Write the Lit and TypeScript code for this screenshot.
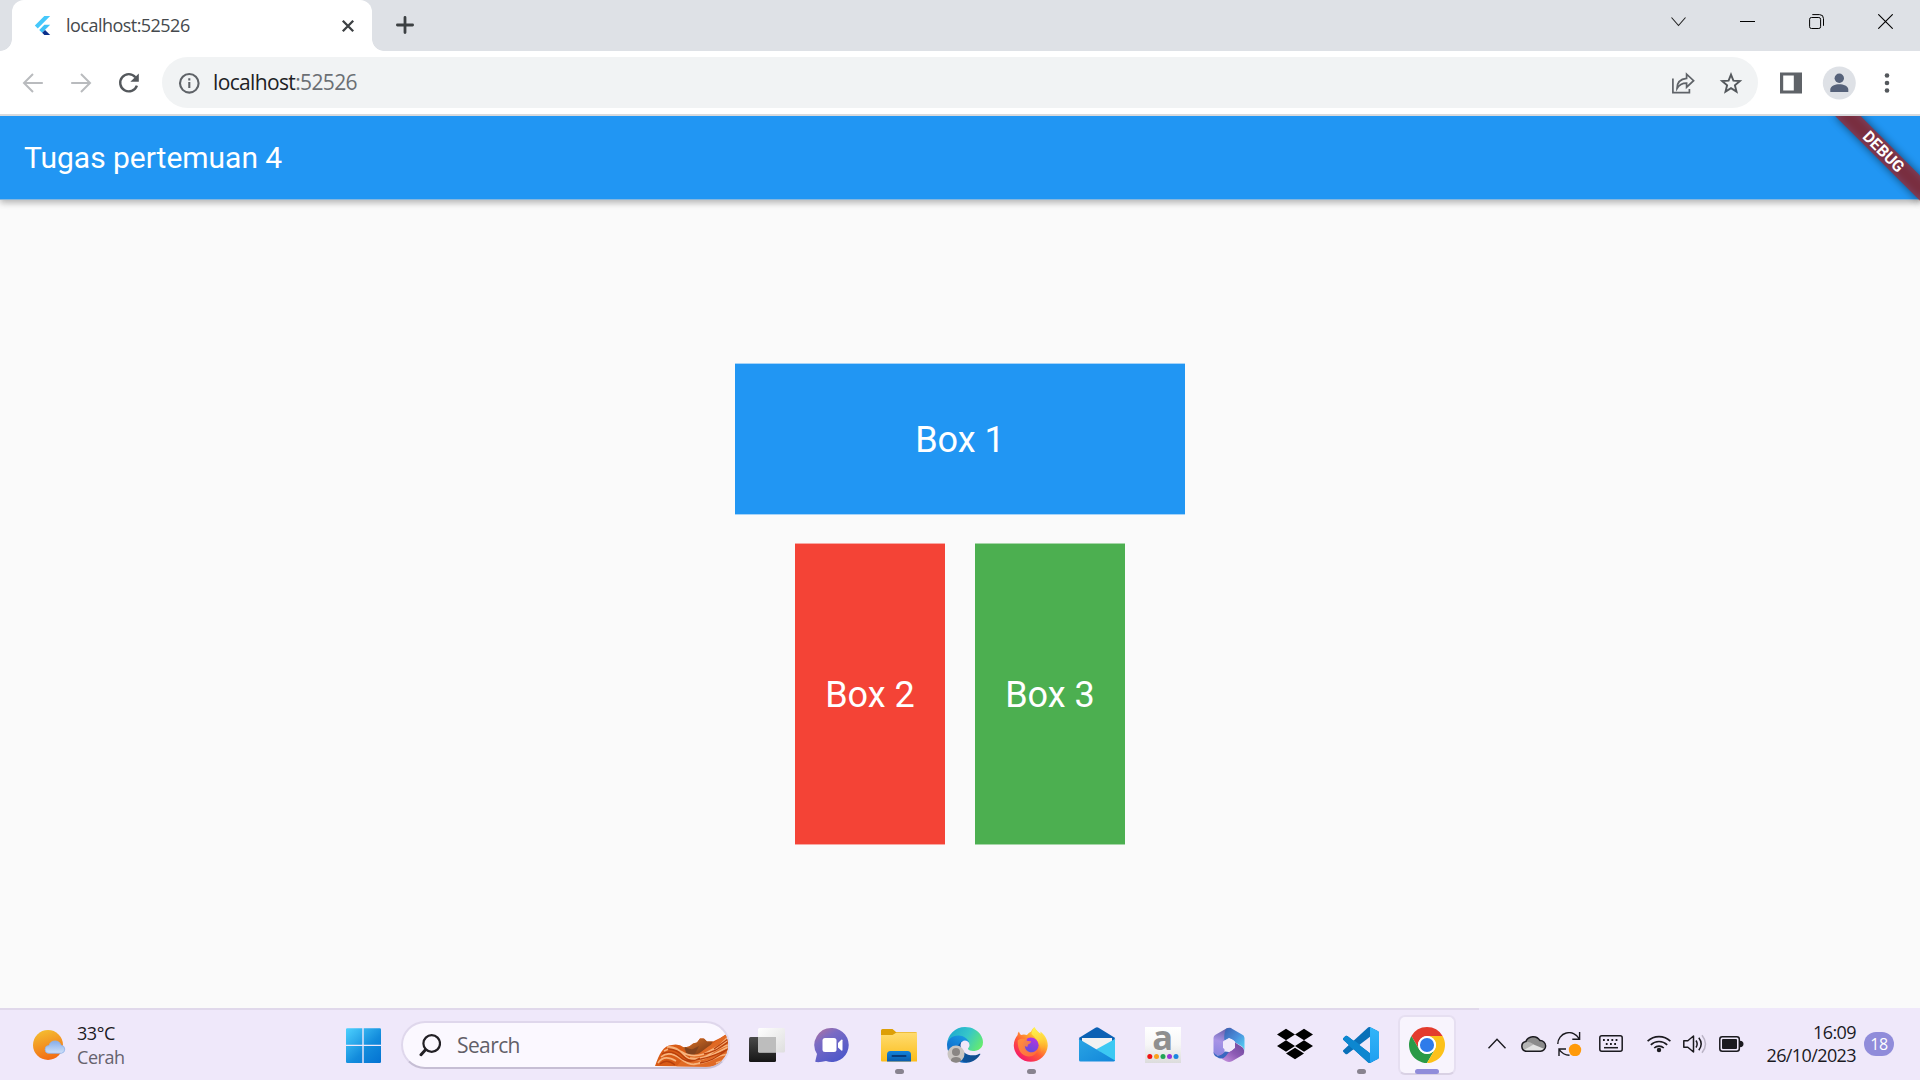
import { LitElement, html, svg, css, nothing } from "lit";
import { customElement } from "lit/decorators.js";
import { classMap } from "lit/directives/class-map.js";

const uiFont = css`"Open Sans", "Noto Sans", sans-serif`;

/* ---------- Browser window: tab strip and toolbar ---------- */

@customElement("browser-bar")
class BrowserBar extends LitElement {
  static styles = css`
    :host { display: block; font-family: ${uiFont}; }
    svg { display: block; flex: none; }
    .strip { display: flex; height: 51px; background: #dee1e6; padding-left: 12px; }
    .tab {
      position: relative; display: flex; align-items: center; box-sizing: border-box;
      width: 360px; height: 51px; padding: 0 17px 0 21px; background: #fff;
      border-radius: 12px 12px 0 0;
    }
    .tab::before, .tab::after {
      content: ""; position: absolute; bottom: 0; width: 12px; height: 12px;
    }
    .tab::before { left: -12px; background: radial-gradient(circle at 0 0, transparent 11.5px, #fff 12.2px); }
    .tab::after { right: -12px; background: radial-gradient(circle at 100% 0, transparent 11.5px, #fff 12.2px); }
    .tab-title {
      flex: 1; margin-left: 14px; padding-bottom: 2px; font-size: 18px; line-height: 24px; color: #45494d;
      letter-spacing: -0.53px; white-space: nowrap;
    }
    .plus { margin: 16px 0 0 24px; }
    .controls { display: flex; margin-left: auto; padding-top: 14px; gap: 54px; padding-right: 27px; }
    .bar { display: flex; align-items: center; height: 63px; background: #fff; border-bottom: 2px solid #d8dadd; }
    .nav { display: flex; align-items: center; gap: 26px; padding-left: 22px; width: 140px; }
    .omnibox {
      display: flex; align-items: center; flex: none; box-sizing: border-box; width: 1596px; height: 51px;
      border-radius: 26px; background: #f1f3f4; padding: 0 15px 0 16px;
    }
    .url {
      flex: 1; margin-left: 13px; padding-bottom: 2px; font-size: 21px; line-height: 28px; letter-spacing: -0.64px;
      color: #202124; white-space: nowrap;
    }
    .port { color: #6b6f74; }
    .share { margin-right: 1px; }
    .star { margin-left: 23px; }
    .panel { margin-left: 22px; }
    .avatar { margin-left: 20px; }
    .dots { margin-left: 27px; }
  `;

  render() {
    return html`
      <div class="strip">
        <div class="tab">
          <svg width="19" height="19" viewBox="0 0 24 24">
            <path fill="#45c8fb" d="M14.314 0L2.3 12 6 15.7 21.684.013h-7.357z" />
            <path fill="#3fc2f7" d="M14.328 11.072L7.857 17.53l3.69 3.69 10.14-10.14z" />
            <path fill="#0b2f8a" d="M11.547 21.22L14.327 24H21.7l-6.46-6.468z" />
          </svg>
          <span class="tab-title">localhost:52526</span>
          <svg width="14" height="14" viewBox="0 0 14 14" stroke="#3c4043" stroke-width="2.3">
            <path d="M1.8 1.8l10.4 10.4M12.2 1.8L1.8 12.2" />
          </svg>
        </div>
        <svg class="plus" width="18" height="18" viewBox="0 0 18 18" stroke="#3c4043" stroke-width="2.8" stroke-linecap="round">
          <path d="M9 1.4v15.2M1.4 9h15.2" />
        </svg>
        <div class="controls">
          <svg width="15" height="15" viewBox="0 0 15 15" fill="none" stroke="#222" stroke-width="1.1"><path d="M.5 3.5L7.5 11.5 14.5 3.5" /></svg>
          <svg width="15" height="15" viewBox="0 0 15 15"><rect y="7" width="15" height="1" fill="#000" /></svg>
          <svg width="15" height="15" viewBox="0 0 15 15" fill="none" stroke="#000">
            <rect x=".6" y="3.5" width="11" height="11" rx="1.8" />
            <path d="M3.3 .6h7.2a4 4 0 0 1 4 4v7.2" />
          </svg>
          <svg width="15" height="15" viewBox="0 0 15 15" stroke="#000" stroke-width="1.1"><path d="M.3 .3l14.4 14.4M14.7 .3L.3 14.7" /></svg>
        </div>
      </div>
      <div class="bar">
        <div class="nav">
          <svg width="22" height="22" viewBox="0 0 22 22" fill="none" stroke="#b9bbbe" stroke-width="2"><path d="M20.8 11H2.5M11 2L2 11l9 9" /></svg>
          <svg width="22" height="22" viewBox="0 0 22 22" fill="none" stroke="#b9bbbe" stroke-width="2"><path d="M1.2 11h18.3M11 2l9 9-9 9" /></svg>
          <svg width="22" height="22" viewBox="0 0 22 22" fill="none">
            <path d="M17.4 5.2A8.6 8.6 0 1 0 18.9 13.6" stroke="#54585c" stroke-width="2.4" />
            <path d="M20.8 1.4v8.4h-8.4z" fill="#54585c" />
          </svg>
        </div>
        <div class="omnibox">
          <svg width="22" height="22" viewBox="0 0 22 22" fill="none" stroke="#5f6368" stroke-width="2.1">
            <circle cx="11.3" cy="11.3" r="9.3" /><path d="M11.3 10v6M11.3 6.200v2.300" />
          </svg>
          <span class="url">localhost<span class="port">:52526</span></span>
          <svg class="share" width="24" height="22" viewBox="0 0 24 22" fill="none" stroke="#5f6368" stroke-width="1.7">
            <path d="M1.9 6.5V20.6H18.4V17" />
            <path stroke-linejoin="miter" d="M6 16.5C6 10.5 9.5 7 15.6 6.4V2.2L22.6 8.7 15.6 15.2V11.2C11 11.2 8.2 12.6 6 16.5z" />
          </svg>
          <svg class="star" width="24" height="24" viewBox="0 0 24 24" fill="none" stroke="#54585c" stroke-width="1.9">
            <path d="M12 3.6l2.4 6 6.5.5-5 4.2 1.6 6.3L12 17.1l-5.500 3.500 1.600-6.300-5-4.200 6.500-.5z" />
          </svg>
        </div>
        <svg class="panel" width="22" height="22" viewBox="0 0 22 22"><path fill="#5f6368" fill-rule="evenodd" d="M0 .5h22v21H0zM3.2 3.5v15h10.6v-15z" /></svg>
        <svg class="avatar" width="34" height="34" viewBox="0 0 34 34">
          <circle cx="17.300" cy="17" r="16.500" fill="#dee1e6" />
          <circle cx="17.300" cy="12.200" r="4.700" fill="#56627a" />
          <path fill="#56627a" d="M8.300 26v-2.400c0-3.800 5-5.400 9-5.400s9 1.600 9 5.400V26z" />
        </svg>
        <svg class="dots" width="8" height="22" viewBox="0 0 8 22" fill="#54585c">
          <circle cx="4" cy="3.5" r="2.3" /><circle cx="4" cy="11" r="2.3" /><circle cx="4" cy="18.5" r="2.3" />
        </svg>
      </div>
    `;
  }
}

/* ---------- Page content ---------- */

@customElement("demo-page")
class DemoPage extends LitElement {
  static styles = css`
    :host {
      display: flex; flex-direction: column; position: relative; overflow: hidden;
      background: #fafafa; font-family: Roboto, sans-serif; color: #fff;
    }
    .appbar {
      display: flex; align-items: center; box-sizing: border-box; height: 84px; flex: none; padding-left: 24px;
      background: #2196f3; border-bottom: 1px solid #86b7de; font-size: 30px; font-weight: 450;
      letter-spacing: -0.02px; white-space: nowrap;
      box-shadow: 0 3px 6px rgba(0, 0, 0, 0.2), 0 1px 9px rgba(0, 0, 0, 0.12);
    }
    .banner { position: absolute; top: 0; right: 0; display: block; }
    .body { flex: 1; display: flex; flex-direction: column; align-items: center; justify-content: center; gap: 30px; }
    .row { display: flex; gap: 30px; }
    .box {
      display: flex; align-items: center; justify-content: center; box-sizing: border-box; width: 150px; height: 300px;
      padding-top: 2px; font-size: 36px; line-height: 42px;
    }
    .blue { width: 450px; height: 150px; background: #2196f3; box-shadow: 0 -1px #a6d3f8, 0 1px #a6d3f8; }
    .red { background: #f44336; box-shadow: 0 -1px #f8a8a3, 0 1px #f8a8a3; }
    .green { background: #4caf50; box-shadow: 0 -1px #a6d6a8, 0 1px #a6d6a8; }
  `;

  render() {
    return html`
      <div class="appbar">Tugas pertemuan 4</div>
      <div class="body">
        <div class="box blue">Box 1</div>
        <div class="row">
          <div class="box red">Box 2</div>
          <div class="box green">Box 3</div>
        </div>
      </div>
      <svg class="banner" width="110" height="110" viewBox="-110 0 110 110">
        <defs><filter id="soft" x="-20%" y="-80%" width="140%" height="260%"><feGaussianBlur stdDeviation="4.5" /></filter></defs>
        <g transform="rotate(45)">
          <rect x="-60" y="42" width="120" height="18" fill="#000" opacity=".5" filter="url(#soft)" />
          <rect x="-60" y="42" width="120" height="18" fill="#b71c1c" fill-opacity=".627" />
          <text x="-.5" y="56.4" text-anchor="middle" textLength="51" lengthAdjust="spacingAndGlyphs" font-family="Roboto, sans-serif" font-size="16" font-weight="700" fill="#fff">DEBUG</text>
        </g>
      </svg>
    `;
  }
}

/* ---------- Taskbar ---------- */

const appIcons = {
  taskView: svg`
    <defs>
      <linearGradient id="tv1" x2="0" y2="1"><stop stop-color="#4a4a4a" /><stop offset="1" stop-color="#161616" /></linearGradient>
      <linearGradient id="tv2" x2="1" y2="1"><stop stop-color="#fff" /><stop offset="1" stop-color="#dedede" /></linearGradient>
    </defs>
    <rect x="0" y="10" width="27" height="25" rx="1.5" fill="url(#tv1)" />
    <rect x="9" y="1" width="27" height="24.5" rx="1.5" fill="url(#tv2)" />
    <path d="M9 10h18v15.500h-16.500a1.500 1.500 0 0 1-1.500-1.500z" fill="#bdbdbd" />`,
  chat: svg`
    <defs><linearGradient id="ch" x1=".1" y1="0" x2=".7" y2=".9"><stop stop-color="#b0729f" /><stop offset=".35" stop-color="#7a6bc4" /><stop offset="1" stop-color="#5059c9" /></linearGradient></defs>
    <path fill="url(#ch)" d="M17.500 1A17 17 0 1 1 11 34c-3 .9-6.500 1.300-9.700 1.100C.4 35 .2 34.500.4 33.800L2 27A17 17 0 0 1 17.500 1z" />
    <rect x="7.500" y="11" width="14" height="14" rx="2.500" fill="#fff" />
    <path fill="#fff" d="M23 16l3.300-3.200c.6-.5 1.200-.2 1.200.5v9.600c0 .8-.6 1-1.200.5L23 20.500z" />`,
  folder: svg`
    <defs>
      <linearGradient id="fo" x2="0" y2="1"><stop stop-color="#ffdc70" /><stop offset="1" stop-color="#fbbd1b" /></linearGradient>
      <linearGradient id="fb" x2="0" y2="1"><stop stop-color="#1183dc" /><stop offset="1" stop-color="#0a5cab" /></linearGradient>
    </defs>
    <path fill="#dd9f07" d="M0 3.500A1.500 1.500 0 0 1 1.500 2h10l3.500 3h19.500A1.500 1.500 0 0 1 36 6.500V14H0z" />
    <path fill="url(#fo)" d="M0 8h11.500l4-2.500h20.500v29H1a1 1 0 0 1-1-1z" />
    <path fill="url(#fb)" d="M6 34.500V27.500a3.500 3.500 0 0 1 3.500-3.500h17a3.500 3.500 0 0 1 3.500 3.500v7z" />
    <rect x="10.500" y="28" width="15" height="2" rx="1" fill="#063b7b" />`,
  edge: svg`
    <defs>
      <linearGradient id="ed1" x1="0" y1=".5" x2="1" y2=".5"><stop stop-color="#0c59a4" /><stop offset="1" stop-color="#114a8b" /></linearGradient>
      <linearGradient id="ed2" x1=".7" y1="0" x2=".2" y2="1"><stop stop-color="#1b9de2" /><stop offset=".4" stop-color="#1380d8" /><stop offset="1" stop-color="#0f5fb8" /></linearGradient>
      <linearGradient id="ed3" x1="0" y1=".3" x2="1" y2=".7"><stop stop-color="#1da9cf" /><stop offset=".5" stop-color="#36c6c9" /><stop offset="1" stop-color="#66eb6e" /></linearGradient>
    </defs>
    <g transform="scale(.1406)">
      <path fill="url(#ed1)" d="M231 190.500c-3.400 1.800-6.900 3.400-10.500 4.700a101.500 101.500 0 0 1-35.900 6.500c-47.300 0-88.500-32.500-88.500-74.300a31.500 31.500 0 0 1 16.400-27.300c-42.800 1.800-53.800 46.400-53.800 72.500 0 73.900 68.100 81.400 82.800 81.400 7.900 0 19.800-2.300 27-4.600l1.300-.4a128.300 128.300 0 0 0 66.600-52.800 4 4 0 0 0-5.400-5.700z" />
      <path fill="url(#ed2)" d="M105.700 241.400a79.200 79.200 0 0 1-22.700-21.300 80.700 80.700 0 0 1 29.500-120c3.100-1.500 8.400-4.100 15.500-4a32.400 32.400 0 0 1 25.700 13 31.900 31.900 0 0 1 6.300 18.700c0-.2 24.500-79.600-80-79.600-43.900 0-80 41.700-80 78.200a130.200 130.200 0 0 0 12.100 56 128 128 0 0 0 156.400 67 75.500 75.500 0 0 1-62.800-8z" />
      <path fill="url(#ed3)" d="M152.300 148.900c-.8 1-3.300 2.500-3.300 5.700 0 2.600 1.700 5.100 4.700 7.200 14.400 10 41.500 8.700 41.600 8.700a59.600 59.600 0 0 0 30.300-8.300 61.400 61.400 0 0 0 30.400-52.900c.3-22.400-8-37.300-11.300-43.900C223.500 23.900 177.700 0 128 0A128 128 0 0 0 0 126.200c.5-36.500 36.800-66 80-66 3.500 0 23.500.3 42 10.100 16.300 8.600 24.900 18.900 30.800 29.200 6.200 10.700 7.300 24.100 7.300 29.500 0 5.300-2.700 13.300-7.800 19.900z" />
    </g>
    <circle cx="9" cy="27" r="8.500" fill="#c9c5c1" />
    <circle cx="9" cy="25" r="4" fill="#8a8683" />
    <path fill="#8a8683" d="M4 34v-1c0-2 2.500-3 5-3s5 1 5 3v1a8.500 8.500 0 0 1-10 0z" />`,
  firefox: svg`
    <defs>
      <linearGradient id="ff1" x1=".85" y1=".1" x2=".2" y2=".95"><stop stop-color="#fff44f" /><stop offset=".3" stop-color="#ffb02e" /><stop offset=".6" stop-color="#ff5a36" /><stop offset="1" stop-color="#f5156c" /></linearGradient>
      <linearGradient id="ff2" x1=".7" y1="0" x2=".3" y2="1"><stop stop-color="#b833e1" /><stop offset="1" stop-color="#5b4fdc" /></linearGradient>
      <linearGradient id="ff3" x1="0" y1="0" x2="1" y2=".6"><stop stop-color="#ff9640" /><stop offset="1" stop-color="#ff7139" /></linearGradient>
      <linearGradient id="ff4" x1=".5" y1="0" x2=".6" y2="1"><stop stop-color="#fff44f" /><stop offset=".5" stop-color="#ffd43a" /><stop offset="1" stop-color="#ff9a2b" stop-opacity=".2" /></linearGradient>
    </defs>
    <path fill="url(#ff1)" d="M6 4.500c.3 1.500 1 2.700 2 3.500 1.800-.7 4-.7 6 0C15 6.500 16.500 5.300 18 4.800 19 2.500 20 1 21.500.2 23 3 25.500 5 27.500 6.700c0-.7 0-1.500-.2-2.200C32 8 35 13 34.700 19A17 17 0 0 1 .8 19C.6 14.500 2.500 10.500 4.700 8c-.1-1.200.4-2.600 1.300-3.500z" />
    <path fill="url(#ff4)" d="M18.500 7C18.800 4 20 1.200 21.500.2 23 4.500 28 6.500 30.300 12c2 5.200.8 10.500-2.300 14 0-6-1.500-11-9.500-19z" />
    <circle cx="17.800" cy="18.200" r="7.800" fill="url(#ff2)" />
    <path fill="url(#ff3)" d="M4.700 13.500c2-1.800 4.500-2 6.500-1.200 1-.8 2.300-1.200 3.600-1.300-.8.900-1.200 1.800-1 2.700 1.200.5 3 .3 4.400.5-.1 1.600-1.700 2.500-3.200 3.200-.4 1-.4 1.600-.1 2.200-1 .3-2.200.1-3-.6 0 4.200 3.700 6.700 7.500 6.200 2.500-.4 4.500-2 5.700-4-1 6-5.500 8.600-9.700 8.200-6.800-.5-10.900-6-10.700-15.900z" opacity=".9" />`,
  mail: svg`
    <defs>
      <linearGradient id="ma1" x2="1" y2="0"><stop stop-color="#1290e0" /><stop offset="1" stop-color="#35c8f5" /></linearGradient>
      <linearGradient id="ma2" x2="1" y2="1"><stop stop-color="#2aa5e4" /><stop offset="1" stop-color="#1286da" /></linearGradient>
    </defs>
    <path fill="#0b61b4" d="M16.500.8a3 3 0 0 1 3 0L35 10.200q1 .8 1 2v2H0v-2q0-1.200 1-2z" />
    <path fill="#f2f2f2" d="M3 11h30v8L18 28 3 19z" />
    <path fill="url(#ma1)" d="M36 12v22H10z" />
    <path fill="#3cc9f3" d="M36 12L17 22.500 36 34z" />
    <path fill="url(#ma2)" d="M0 12l36 21.500q-.4 1-1.500 1H1.500A1.500 1.500 0 0 1 0 33z" />`,
  amazon: svg`
    <defs><linearGradient id="am" x2="0" y2="1"><stop stop-color="#fff" /><stop offset=".5" stop-color="#f6f6f6" /><stop offset="1" stop-color="#dcdcdc" /></linearGradient></defs>
    <rect width="36" height="36" fill="url(#am)" />
    <text x="17.700" y="23.300" text-anchor="middle" font-family="Open Sans, sans-serif" font-size="34.500" font-weight="700" fill="#8f8f8f">a</text>
    <circle cx="4.800" cy="29.500" r="2.500" fill="#f01414" /><circle cx="11.500" cy="29.500" r="2.500" fill="#f9a11b" />
    <circle cx="18" cy="29.500" r="2.500" fill="#22a455" /><circle cx="24.500" cy="29.500" r="2.500" fill="#9b35d6" />
    <circle cx="31" cy="29.500" r="2.500" fill="#1b86e0" />`,
  office: svg`
    <defs>
      <linearGradient id="of1" x1=".5" y1="0" x2=".3" y2="1"><stop stop-color="#6560a8" /><stop offset=".5" stop-color="#a893e6" /><stop offset="1" stop-color="#8c86e0" /></linearGradient>
      <linearGradient id="of2" x1="0" y1="0" x2="1" y2="1"><stop stop-color="#3a5fb0" /><stop offset=".5" stop-color="#4b8fdc" /><stop offset="1" stop-color="#55dcf6" /></linearGradient>
      <linearGradient id="of3" x1="1" y1="0" x2="0" y2="1"><stop stop-color="#6a4799" /><stop offset=".5" stop-color="#8e5bb5" /><stop offset="1" stop-color="#cf9be6" /></linearGradient>
    </defs>
    <path fill="url(#of1)" d="M14.500 2L4.500 7.700A4 4 0 0 0 2.500 11v14q0 3 2.500 3l4 .5 4.500-3V14q0-2 2-3l3-2 2-8q-3-1-6 1z" />
    <path fill="url(#of2)" d="M15 1.800q3-1.500 6 0l10 5.800a4 4 0 0 1 2.500 3.500v13q-.5-3.500-4-5.500l-6-3.500q-1-3-5-3.600l-5 3q-1-7 1.500-12.700z" />
    <path fill="url(#of3)" d="M24 15.500l7 4.500q3.500 3 1.500 7.500l-11.500 6.700q-3 1.500-6 0L11 32l-2-5 10-2.500q5-2 5-9z" />
    <path fill="#3a67c0" d="M2.600 25q1 3 4 3.400 4 0 6.500-3l.8-1 4 .6-3 4q-4 4.500-9 1L4 29q-1.400-1.500-1.400-4z" />
    <path fill="#f1eafb" d="M18 11.500l5.500 3v6.500L18 24.500 12.500 21v-6.500z" stroke="#f1eafb" stroke-width="1" stroke-linejoin="round" />`,
  dropbox: svg`
    <path transform="translate(0 -1) scale(1.500)" d="M6 1.807L0 5.629l6 3.822 6.001-3.822L6 1.807zM18 1.807l-6 3.822 6 3.822 6-3.822-6-3.822zM0 13.274l6 3.822 6.001-3.822L6 9.452l-6 3.822zM18 9.452l-6 3.822 6 3.822 6-3.822-6-3.822zM6 18.371l6.001 3.822 6-3.822-6-3.822L6 18.371z" />`,
  code: svg`
    <defs>
      <clipPath id="vsc"><path d="M23.150 2.587L18.210.210a1.494 1.494 0 0 0-1.705.290l-9.460 8.630-4.120-3.128a.999.999 0 0 0-1.276.057L.327 7.261A1 1 0 0 0 .326 8.740L3.899 12 .326 15.260a1 1 0 0 0 .001 1.479L1.650 17.940a.999.999 0 0 0 1.276.057l4.120-3.128 9.460 8.630a1.492 1.492 0 0 0 1.704.290l4.942-2.377A1.500 1.500 0 0 0 24 20.060V3.939a1.500 1.500 0 0 0-.850-1.352zm-5.146 14.861L10.826 12l7.178-5.448v10.896z" clip-rule="evenodd" /></clipPath>
      <linearGradient id="vs" x2="0" y2="1"><stop stop-color="#32b5f8" /><stop offset="1" stop-color="#1f9ff0" /></linearGradient>
    </defs>
    <g transform="scale(1.500)" clip-path="url(#vsc)">
      <rect width="24" height="24" fill="#0a70b8" />
      <path fill="#0d87d0" d="M0 9V5L3 5.500 20 18.500V24h-3z" />
      <rect x="18" width="6" height="24" fill="url(#vs)" />
    </g>`,
  chrome: svg`
    <g transform="scale(.75)">
      <path fill="#e33b2e" d="M24 0a24 24 0 0 1 20.780 12H24a12 12 0 0 0-10.390 18L3.220 12A24 24 0 0 1 24 0z" />
      <path fill="#2a9a47" d="M3.220 12L13.610 30A12 12 0 0 0 34.390 30L24 48A24 24 0 0 1 3.220 12z" />
      <path fill="#fcc11a" d="M24 12h20.780A24 24 0 0 1 24 48L34.390 30A12 12 0 0 0 24 12z" />
      <circle cx="24" cy="24" r="12" fill="#fff" /><circle cx="24" cy="24" r="9.400" fill="#2f7bea" />
    </g>`,
};

const apps: { icon: keyof typeof appIcons; open?: boolean; active?: boolean }[] = [
  { icon: "taskView" },
  { icon: "chat" },
  { icon: "folder", open: true },
  { icon: "edge" },
  { icon: "firefox", open: true },
  { icon: "mail" },
  { icon: "amazon" },
  { icon: "office" },
  { icon: "dropbox" },
  { icon: "code", open: true },
  { icon: "chrome", open: true, active: true },
];

@customElement("task-bar")
class TaskBar extends LitElement {
  static styles = css`
    :host {
      display: flex; height: 72px; color: #1b1a1f; font-family: ${uiFont};
      background: linear-gradient(#e0d8eb, #e0d8eb) 0 0 / 1479px 2px no-repeat, #efe8fa;
    }
    svg { display: block; flex: none; }
    .weather { display: flex; width: 345px; box-sizing: border-box; padding: 13px 0 0 33px; gap: 10px; font-size: 18px; line-height: 24px; }
    .weather svg { margin-top: 8px; }
    .temp { letter-spacing: -0.45px; }
    .sky { color: #66626d; letter-spacing: -0.45px; }
    .start { margin: 20px 20px 0 0; }
    .search {
      display: flex; align-items: center; box-sizing: border-box; width: 329px; height: 48px;
      margin-top: 13px; padding-left: 16px; border: 2px solid #dfd7ec; border-bottom-color: #c6bed4; border-radius: 24px;
      background: #fbf8ff; overflow: hidden;
    }
    .query { flex: 1; margin-left: 16px; font-size: 21px; color: #625f68; letter-spacing: -0.6px; }
    .art { align-self: flex-end; }
    .apps { display: flex; margin-left: 4px; }
    .app { display: flex; flex-direction: column; align-items: center; width: 66px; height: 72px; box-sizing: border-box; padding-top: 19px; gap: 6px; }
    .app svg { overflow: visible; }
    .mark { flex: none; width: 9px; height: 5px; border-radius: 3px; background: #88838f; }
    .app.active { width: 58px; height: 60px; margin: 7px 4px 0 4px; padding-top: 10px; border: 2px solid #e6dff1; border-bottom-color: #d9d1e4; border-radius: 7px; background: #f8f4fd; }
    .active .mark { width: 24px; background: #908cda; }
    .tray { display: flex; align-items: flex-start; padding: 24px 0 0 28px; }
    .tray svg { height: 24px; }
    .clock { display: flex; flex-direction: column; align-items: flex-end; width: 111px; padding-top: 13px; font-size: 18px; line-height: 23px; letter-spacing: -0.6px; white-space: nowrap; }
    .badge {
      display: flex; align-items: center; justify-content: center; width: 30px; height: 24px; margin: 24px 0 0 8px;
      border-radius: 12px; background: #908cda; color: #fff; font-size: 16px; letter-spacing: -0.4px;
    }
  `;

  render() {
    return html`
      <div class="weather">
        <svg width="34" height="34" viewBox="0 0 34 34">
          <defs>
            <linearGradient id="sun" x1=".3" y1="0" x2=".6" y2="1"><stop stop-color="#f4bd31" /><stop offset="1" stop-color="#f26a12" /></linearGradient>
            <linearGradient id="cloud" x2="0" y2="1"><stop stop-color="#86aeea" /><stop offset="1" stop-color="#cfe0f8" /></linearGradient>
          </defs>
          <circle cx="15" cy="16" r="15" fill="url(#sun)" />
          <path fill="url(#cloud)" stroke="#8fb2ea" stroke-width=".8" d="M16 24.300a3.900 3.900 0 0 1 0-7.800 6.300 6.300 0 0 1 12-.3 4.100 4.100 0 0 1 .5 8.100z" />
        </svg>
        <div>
          <div class="temp">33°C</div>
          <div class="sky">Cerah</div>
        </div>
      </div>
      <svg class="start" width="36" height="36" viewBox="0 0 36 36">
        <defs><linearGradient id="win" gradientUnits="userSpaceOnUse" x1="0" y1="0" x2="34" y2="36"><stop stop-color="#4fd3ff" /><stop offset=".6" stop-color="#128bdc" /><stop offset="1" stop-color="#0473d2" /></linearGradient></defs>
        <path fill="url(#win)" d="M2.200.300H17.300V16.700H1V1.500Q1 .3 2.200.3zM18.700.300H34.800Q36 .3 36 1.500V16.700H18.700zM1 18.100H17.300V35H2.200Q1 35 1 33.800zM18.700 18.100H36V33.800Q36 35 34.800 35H18.700z" />
      </svg>
      <div class="search">
        <svg width="22" height="23" viewBox="0 0 22 23" fill="none" stroke="#222025"><circle cx="12.700" cy="9.500" r="8.300" stroke-width="2.200" /><path stroke-width="3" stroke-linecap="round" d="M6.500 15.800L2 20.700" /></svg>
        <span class="query">Search</span>
        <svg class="art" width="74" height="34" viewBox="0 0 74 34">
          <defs>
            <clipPath id="art"><path d="M1 33C5 22 9 12 18 12q7-1.500 12 2.500l5-1 4-3 4-1 3-4 4 0 3 3 6 0Q67 5 74 0V34z" /></clipPath>
            <linearGradient id="rock" x2="1" y2="1"><stop stop-color="#e57a2a" /><stop offset="1" stop-color="#6a2f12" /></linearGradient>
          </defs>
          <g clip-path="url(#art)" fill="none">
            <rect width="74" height="34" fill="#d95b16" />
            <path fill="url(#rock)" d="M28 14l8-1 5-4 6-5 6 3 6 1-2 4-10 8-12 3z" />
            <path fill="#82431f" d="M30 13q5 4 9 3l6-3-4 8-8 1z" />
            <path fill="#e06a25" d="M30 25q8 1 17-6t27-19v34H22z" />
            <path stroke="#f7b37c" stroke-width="1.600" d="M4 30q6-9 18-2M7 24q8-7 20 2t20 3M10 18q9-5 18 1t22 2q12-6 23-13M13 14q9-1 16 7t20 5q12-5 25-12M36 25q12 2 20-4t18-9M40 31q12-1 19-5t15-5M57 20q8-7 17-16M62 30l12-4" />
            <path stroke="#b8400c" stroke-width="1.300" d="M6 31q7-6 15 1M8 21q9-5 18 3t20 1M14 16q9 0 15 7t18 3q14-3 27-10M46 30q12-1 28-14M60 16l14-10M50 21q12-2 24-12" />
          </g>
        </svg>
      </div>
      <div class="apps">
        ${apps.map(
          (a) => html`<div class=${classMap({ app: true, active: !!a.active })}>
            <svg width="36" height="36" viewBox="0 0 36 36">${appIcons[a.icon]}</svg>
            ${a.open ? html`<i class="mark"></i>` : nothing}
          </div>`
        )}
      </div>
      <div class="tray">
        <svg width="33" viewBox="0 0 33 24" fill="none" stroke="#1b1a1f" stroke-width="1.400"><path d="M.5 16.200L9 7.200l8.500 9" /></svg>
        <svg width="36" viewBox="0 0 36 24">
          <path fill="#8b8b8b" d="M5.700 19.500A5 5 0 0 1 4.800 9.800 8 8 0 0 1 19 8.800a5.400 5.400 0 0 1 .500 10.700z" />
          <path fill="#b5b5b5" d="M1 15Q1 10.500 5 9.800q4-.5 8 2.600L4 18.500Q1 17.500 1 15z" />
          <path fill="#e2e2e2" d="M3 18l9.500-5.500 11 4.500q-1 2.500-4 2.500H6z" />
          <path fill="none" stroke="#1b1a1f" stroke-width="1.500" d="M5.700 19.300A4.900 4.900 0 0 1 4.800 9.600 8 8 0 0 1 19 8.600a5.300 5.300 0 0 1 .500 10.700z" />
        </svg>
        <svg width="42" viewBox="0 0 42 24" fill="none" stroke="#1b1a1f" stroke-width="1.400">
          <path d="M.800 12A11.300 11.300 0 0 1 22 6.500M22.600 0v7.300h-7.300M9 17H2v7M2 17.300Q6 23 12.500 23.300" />
          <circle cx="18" cy="18" r="6.200" fill="#ff9a0a" stroke="none" />
        </svg>
        <svg width="48" viewBox="0 0 48 24" fill="none" stroke="#1b1a1f" stroke-width="1.500">
          <rect x=".800" y="3.800" width="22.400" height="15.400" rx="2" />
          <path stroke-width="1.800" stroke-dasharray="1.800 2.400" d="M4 8h16.500M6.800 12h12" /><path d="M5 15.700h14" />
        </svg>
        <svg width="36" viewBox="0 0 36 24" fill="none" stroke="#1b1a1f" stroke-width="1.600">
          <path d="M.600 9.200a16.500 16.500 0 0 1 22.800 0M3.800 12.800a11.800 11.800 0 0 1 16.400 0M7.200 16a7 7 0 0 1 9.600 0" />
          <circle cx="12" cy="18" r="2.200" fill="#1b1a1f" stroke="none" />
        </svg>
        <svg width="36" viewBox="0 0 36 24" fill="none" stroke="#1b1a1f" stroke-width="1.500">
          <path stroke-linejoin="round" d="M.800 8.800h4l5.700-4.800v16L4.800 15.200h-4z" />
          <path d="M13 8.500q2.300 3.500 0 7M15.800 5.800q4.800 6.200 0 12.400" /><path stroke="#bbb4c6" d="M19 3.200q7 8.800 0 17.600" />
        </svg>
        <svg width="26" viewBox="0 0 26 24">
          <rect x=".800" y="4.800" width="19.500" height="14.400" rx="2.500" fill="none" stroke="#1b1a1f" stroke-width="1.500" />
          <rect x="3" y="7" width="15" height="10" rx="1" fill="#1b1a1f" /><path fill="#1b1a1f" d="M21 8.700q3.500.3 3.500 3.300T21 15.300z" />
        </svg>
      </div>
      <div class="clock"><span>16:09</span><span>26/10/2023</span></div>
      <div class="badge">18</div>
    `;
  }
}

@customElement("app-root")
class AppRoot extends LitElement {
  static styles = css`
    :host { display: flex; flex-direction: column; width: 1920px; height: 1080px; overflow: hidden; }
    browser-bar, task-bar { flex: none; }
    demo-page { flex: 1; }
  `;

  render() {
    return html`<browser-bar></browser-bar><demo-page></demo-page><task-bar></task-bar>`;
  }
}
